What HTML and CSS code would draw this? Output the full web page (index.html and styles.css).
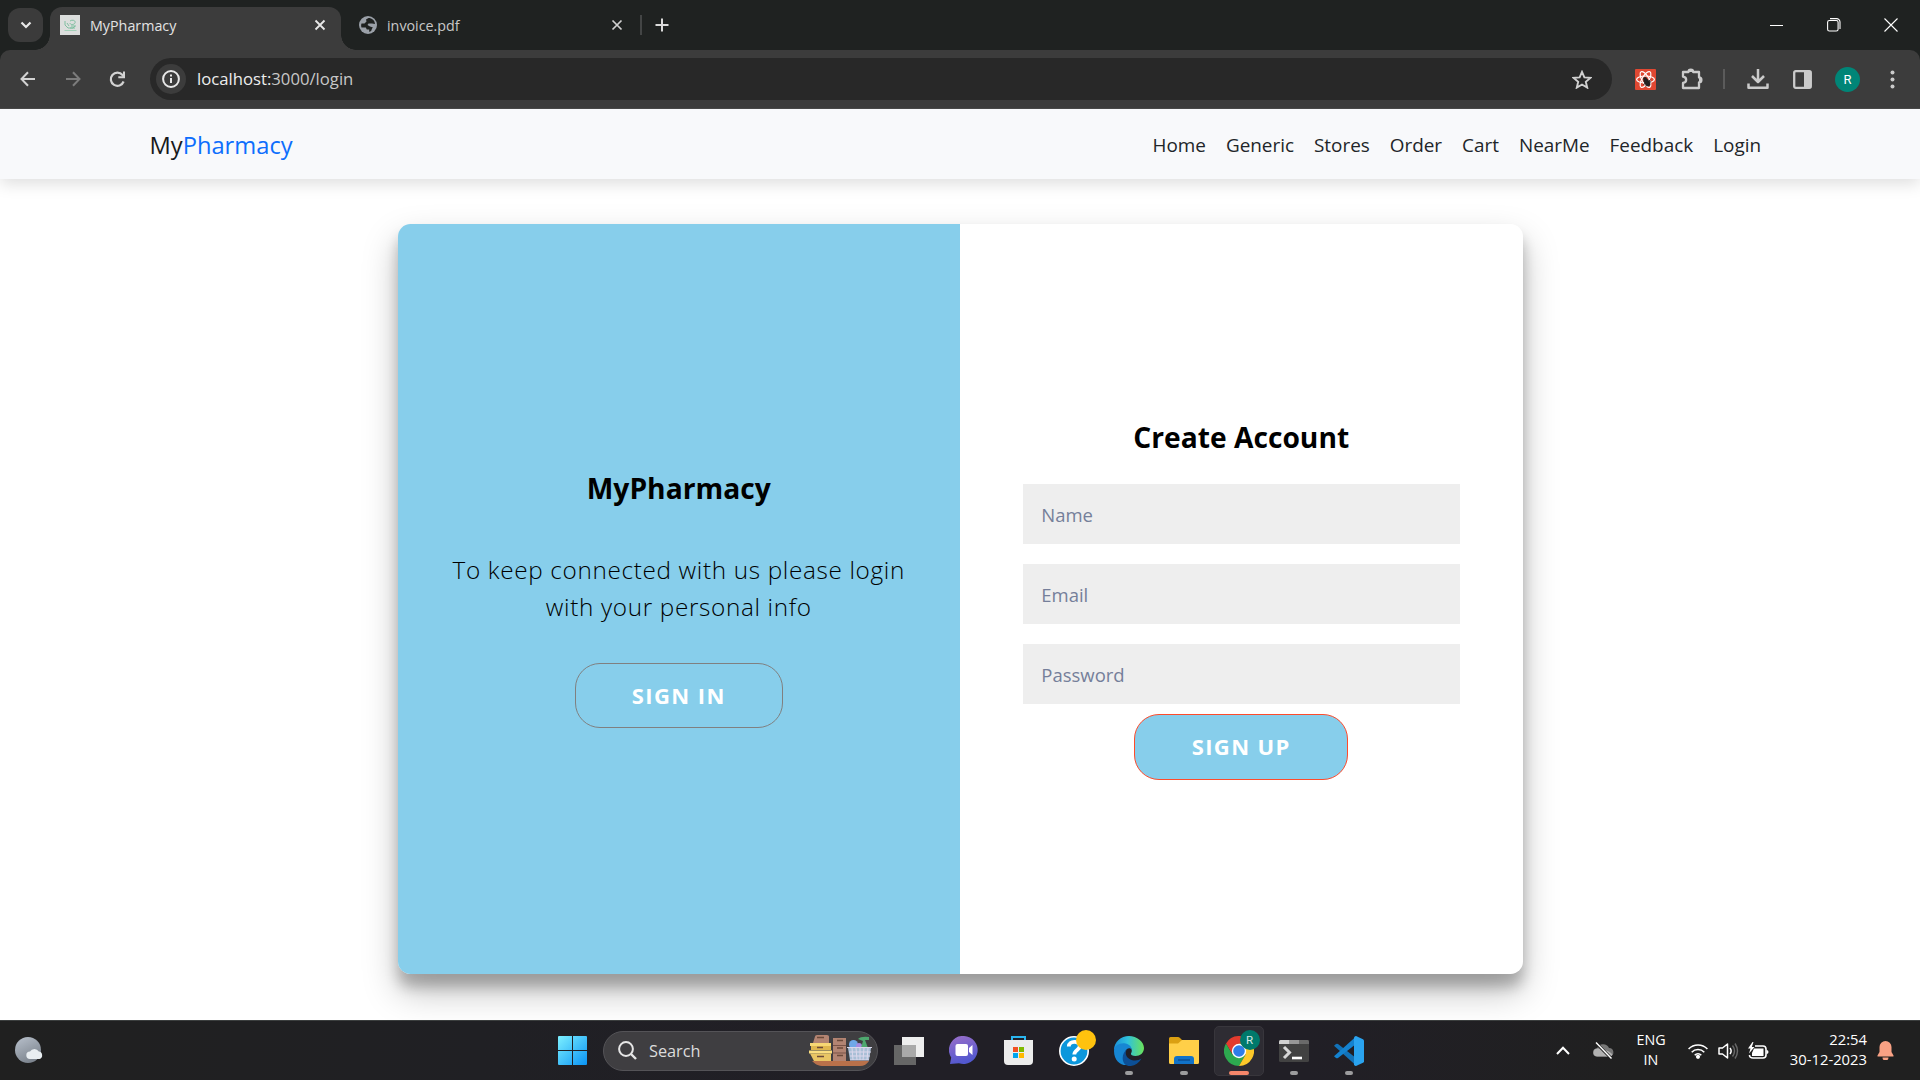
FILE: index.html
```
<!DOCTYPE html>
<html lang="en">
<head>
<meta charset="utf-8">
<title>MyPharmacy</title>
<link rel="stylesheet" href="styles.css">
</head>
<body>
<div class="screen">
  <header class="tabstrip">
    <button class="tab-search" aria-label="Search tabs"><svg width="12" height="8" viewBox="0 0 12 8"><path d="M1.5 1.5 6 6l4.500-4.500" fill="none" stroke="#e8e8e8" stroke-width="2.200"/></svg></button>
    <div class="tab tab-active">
      <svg width="20" height="20" viewBox="0 0 20 20"><rect width="20" height="20" fill="#dcdedd"/><path d="M5 6v4l3 3h5l2-2M7 8l2 3M10 6c3-2 6 0 5 2s-5 2-5 0M11 11h5M10 13h5" fill="none" stroke="#7fbfa0" stroke-width="1"/><path d="M4.500 15.500h12" stroke="#a3d0b8"/></svg>
      <span class="tab-title">MyPharmacy</span>
      <svg class="tab-close" width="12" height="12" viewBox="0 0 12 12"><path d="m1.500 1.500 9 9m0-9-9 9" stroke="#e8e8e8" stroke-width="1.800"/></svg>
    </div>
    <div class="tab tab-idle">
      <svg width="18" height="18" viewBox="0 0 18 18"><circle cx="9" cy="9" r="9" fill="#9aa0a8"/><path d="M9.500 2 7 3.500l.5 2L5.500 7.500H2.500C2 9 2 10 2.500 11.500h4.300l1 2h2.500l-.3 2.300c3.500-.3 2-3 4-4.300L11 10.500 8.500 9l1-1.500H13l3 .5C15.800 4.500 13 2 9.500 2z" fill="#1f2221"/></svg>
      <span class="tab-title">invoice.pdf</span>
      <svg class="tab-close" width="12" height="12" viewBox="0 0 12 12"><path d="m1.500 1.500 9 9m0-9-9 9" stroke="#d0d0d0" stroke-width="1.700"/></svg>
    </div>
    <span class="tab-divider"></span>
    <svg class="new-tab" width="14" height="14" viewBox="0 0 14 14"><path d="M7 .5v13M.5 7h13" stroke="#dadada" stroke-width="2"/></svg>
    <div class="window-controls">
      <svg width="14" height="14" viewBox="0 0 14 14"><path d="M0 7.500h13" stroke="#fff" stroke-width="1"/></svg>
      <svg width="14" height="14" viewBox="0 0 14 14"><rect x=".6" y="2.500" width="10.500" height="10.500" rx="1.800" fill="none" stroke="#fff" stroke-width="1.100"/><path d="M3 .6h6.500a3.500 3.500 0 0 1 3.500 3.500V11" fill="none" stroke="#fff" stroke-width="1.100"/></svg>
      <svg width="14" height="14" viewBox="0 0 14 14"><path d="m.5.5 13 13m0-13-13 13" stroke="#fff" stroke-width="1.100"/></svg>
    </div>
  </header>

  <div class="toolbar-back">
  <div class="toolbar">
    <div class="nav-buttons">
      <svg width="16" height="16" viewBox="0 0 16 16"><path d="M15 8H1.800M8 1.200 1.500 8 8 14.800" fill="none" stroke="#d2d2d2" stroke-width="2"/></svg>
      <svg width="16" height="16" viewBox="0 0 16 16"><path d="M1 8h13.200M8 1.200 14.500 8 8 14.800" fill="none" stroke="#7c7c7c" stroke-width="2"/></svg>
      <svg width="17" height="17" viewBox="0 0 17 17"><path d="M14.600 10.500A6.600 6.600 0 1 1 13.500 4l1.500 1.700" fill="none" stroke="#d2d2d2" stroke-width="2.200"/><path d="M16 .5v6.700H9.300V5.200H14V.5z" fill="#d2d2d2"/></svg>
    </div>
    <div class="omnibox">
      <span class="site-info"><svg width="18" height="18" viewBox="0 0 18 18"><circle cx="9" cy="9" r="7.900" fill="none" stroke="#e8e8e8" stroke-width="2"/><path d="M9 8v5M9 4.500v2" stroke="#e8e8e8" stroke-width="2"/></svg></span>
      <span class="url"><b>localhost:</b>3000/login</span>
      <svg class="star" width="20" height="19" viewBox="0 0 20 19"><path d="m10 1.900 2.400 5.500 5.900.5-4.500 3.900 1.400 5.800L10 14.500l-5.200 3.100 1.400-5.800-4.500-3.900 5.900-.5z" fill="none" stroke="#d0d0d0" stroke-width="1.900"/></svg>
    </div>
    <div class="extensions">
      <svg width="21" height="21" viewBox="0 0 21 21"><rect width="21" height="21" rx="1" fill="#e04832"/><g fill="none" stroke="#fff" stroke-width="1.200"><ellipse cx="10.500" cy="10.500" rx="8.900" ry="3.500"/><ellipse cx="10.500" cy="10.500" rx="8.900" ry="3.500" transform="rotate(60 10.500 10.500)"/><ellipse cx="10.500" cy="10.500" rx="8.900" ry="3.500" transform="rotate(120 10.500 10.500)"/></g><ellipse cx="12" cy="13.500" rx="2.600" ry="4.200" transform="rotate(-35 12 13.500)" fill="#222"/><circle cx="10" cy="9.800" r="1.900" fill="#222"/><path d="m8.500 12 7.500 1M8.500 15.500l7-4.500M12 10l-1 7.500" stroke="#222"/></svg>
      <svg class="x-puzzle" width="22" height="22" viewBox="0 0 22 22"><path d="M2 4h5.500a2.300 2.300 0 0 1 4.600 0H18v5.500a2.300 2.300 0 0 1 0 4.800V20H2v-5c4.200-.5 4.200-5.800 0-6.300z" fill="none" stroke="#cbcbcb" stroke-width="2.300" stroke-linejoin="round"/><path d="M7.500 4a2.300 2.300 0 0 1 4.600 0zM18 9.500a2.300 2.300 0 0 1 0 4.800z" fill="#cbcbcb"/></svg>
      <span class="tool-divider"></span>
      <svg class="x-download" width="22" height="21" viewBox="0 0 22 21"><path d="M11 0v12M5 7l6 6 6-6M1.500 14.500v4.300h19v-4.300" fill="none" stroke="#cbcbcb" stroke-width="2.500" stroke-linejoin="round"/></svg>
      <svg class="x-panel" width="19" height="19" viewBox="0 0 19 19"><rect x="1.200" y="1.200" width="16.600" height="16.600" rx="1.500" fill="none" stroke="#cbcbcb" stroke-width="2.300"/><path d="M11 1h7v17h-7z" fill="#cbcbcb"/></svg>
      <span class="avatar">R</span>
      <svg class="x-menu" width="5" height="19" viewBox="0 0 5 19"><g fill="#cbcbcb"><circle cx="2.500" cy="2.500" r="2"/><circle cx="2.500" cy="9.500" r="2"/><circle cx="2.500" cy="16.500" r="2"/></g></svg>
    </div>
  </div>
  </div>

  <main class="page">
    <nav class="navbar">
      <div class="brand">My<span>Pharmacy</span></div>
      <ul class="links">
        <li>Home</li><li>Generic</li><li>Stores</li><li>Order</li><li>Cart</li><li>NearMe</li><li>Feedback</li><li>Login</li>
      </ul>
    </nav>
    <section class="card">
      <div class="panel panel-intro">
        <h1>MyPharmacy</h1>
        <p>To keep connected with us please login<br>with your personal info</p>
        <button class="btn btn-ghost">SIGN IN</button>
      </div>
      <form class="panel panel-form">
        <h1>Create Account</h1>
        <input type="text" placeholder="Name">
        <input type="email" placeholder="Email">
        <input type="password" placeholder="Password">
        <button class="btn btn-primary" type="button">SIGN UP</button>
      </form>
    </section>
  </main>

  <footer class="taskbar">
    <svg class="weather" width="29" height="27" viewBox="0 0 29 27"><defs><linearGradient id="moon" x2=".5" y2="1"><stop stop-color="#b9c1cc"/><stop offset="1" stop-color="#7d858f"/></linearGradient></defs><circle cx="13" cy="13" r="13" fill="url(#moon)"/><path d="M15 22a3.700 3.700 0 0 1 0-7.400 5 5 0 0 1 8.800 0 3.800 3.800 0 0 1 .7 7.400z" fill="#e9eef2"/></svg>
    <div class="apps">
      <span class="app"><svg width="29" height="29" viewBox="0 0 29 29"><defs><linearGradient id="win" x2="1" y2="1"><stop stop-color="#7df0ff"/><stop offset="1" stop-color="#0a94f5"/></linearGradient></defs><path d="M0 1q0-1 1-1h13v14H0zM15 0h13q1 0 1 1v13H15zM0 15h14v14H1q-1 0-1-1zM15 15h14v13q0 1-1 1H15z" fill="url(#win)"/></svg></span>
      <div class="search">
        <svg width="19" height="19" viewBox="0 0 19 19"><circle cx="8" cy="8" r="6.900" fill="none" stroke="#e6e6e6" stroke-width="2"/><path d="m13 13 5 5" stroke="#e6e6e6" stroke-width="2.400"/></svg>
        <span>Search</span>
        <svg class="search-art" width="63" height="31" viewBox="0 0 63 31"><path d="M3 26h57c-2 3-5 5-9 5H15c-6 0-9-2-12-5z" fill="#b9714a"/><path d="M6 1.500Q6 0 8 0h10q2 0 2 1.500V8H4z" fill="#b28472"/><path d="M1 8h21v3H1z" fill="#f7d774"/><path d="M2 11h20v4H2z" fill="#dfb64f"/><path d="M0 15.500h23v3H0z" fill="#fbdf80"/><path d="M1 18.500h21V26H5z" fill="#e9c665"/><path d="M24 3h13v23H24z" fill="#b28472"/><path d="M24 10.500h13M24 18h13" stroke="#795347"/><path d="M8 2.500h7M8 12.500h6M8 21.500h7M28 5.500h6M28 13h6M28 20.500h6" stroke="#6b4a3a" stroke-width="1.400"/><circle cx="44.500" cy="9.500" r="4.500" fill="#6fa8e8"/><circle cx="50" cy="11" r="3" fill="#a58be0"/><path d="M49 4q3-3 11-2v3h-4l3 8h-7l2-7z" fill="#4ea86f"/><path d="m39 13 2 12h19l2-12z" fill="#a9bfd6"/><path d="M38 12.500h25M40 17h22M41 21h20M41 25h19M43 13l1 12M47 13l1 12M51 13v12M55 13l-1 12M59 13l-1 12" stroke="#dcd8ec" stroke-width="1"/></svg>
      </div>
      <span class="app"><svg width="30" height="28" viewBox="0 0 30 28"><path d="M0 8h22v20H0z" fill="#666" /><path d="M8 0h22v20H8z" fill="#eee"/><path d="M8 8h14v12H8z" fill="#a9a9a9"/></svg></span>
      <span class="app nudge"><svg width="29" height="29" viewBox="0 0 29 29"><defs><linearGradient id="chat" x2=".3" y2="1"><stop stop-color="#9b6fc9"/><stop offset="1" stop-color="#5258cf"/></linearGradient></defs><path d="M15 0a14 14 0 1 1-5 27.200L1 28l1.200-6.500A14 14 0 0 1 15 0z" fill="url(#chat)"/><rect x="6.500" y="8" width="12.500" height="12" rx="2" fill="#fff"/><path d="m20 12 3.500-3v10L20 16z" fill="#fff"/></svg></span>
      <span class="app nudge"><svg width="29" height="29" viewBox="0 0 29 29"><path d="M8 5V1h13v4" fill="none" stroke="#2ab6f0" stroke-width="2"/><path d="M0 4h29v21q0 4-4 4H4q-4 0-4-4z" fill="#ececec"/><path d="M9 11h5v5H9z" fill="#f25022"/><path d="M15 11h5v5h-5z" fill="#7fba00"/><path d="M9 17h5v5H9z" fill="#00a4ef"/><path d="M15 17h5v5h-5z" fill="#ffb900"/></svg></span>
      <span class="app"><svg width="30" height="30" viewBox="0 0 30 30"><circle cx="15" cy="15" r="14.200" fill="#0c97dc" stroke="#fff" stroke-width="1.600"/><path d="M9.800 10.500c0-6 11-6 11-.5 0 4-5.500 4-5.500 8.500" fill="none" stroke="#fff" stroke-width="3.800"/><circle cx="15.200" cy="23" r="2.500" fill="#fff"/></svg><i class="dot-badge"></i></span>
      <span class="app running"><svg width="30" height="30" viewBox="0 0 30 30"><defs><linearGradient id="edge" x2="1"><stop stop-color="#1b8fd8"/><stop offset=".45" stop-color="#2fc1dd"/><stop offset="1" stop-color="#6be35a"/></linearGradient></defs><path d="M0 14C0 6 7 0 15 0s15 6 15 12c0 5-4 8-8.500 8-3 0-5-1-4.500-2.500 2-3 .5-8-5-8C7 9.500 2 11 0 14z" fill="url(#edge)"/><path d="M0 15c0-5 5-8 10-7.800 5 .3 8 4 7.800 7-.8-2-3-2.500-4.800-1.200-4 3-2 13 6 13.500C12 32.500 0 28 0 15z" fill="#1786d3"/><path d="M13 13.500c-2 2-2 7 2.500 9.500 4.500 2.500 9 1.500 12-.5-3 5.500-8 8-13 7.500C7 29 7 17 13 13.500z" fill="#0c4f96"/></svg></span>
      <span class="app running"><svg width="30" height="27" viewBox="0 0 30 27"><path d="M0 1.500Q0 0 1.500 0H9q1 0 2 1l2 2H28q2 0 2 2v6H0z" fill="#dba012"/><path d="M0 6.500h9L13 3h17v22.500q0 1.500-1.500 1.500h-27Q0 27 0 25.500z" fill="#ffcf48"/><path d="M5 27v-5q0-3 3-3h14q3 0 3 3v5z" fill="#1172c8"/><path d="M9 23h12" stroke="#0a4a8c" stroke-width="1.300"/></svg></span>
      <span class="app running current"><svg width="30" height="30" viewBox="0 0 30 30"><path d="M2 7.500A15 15 0 0 1 28 7.500H15l-6.500 11z" fill="#e33b2e"/><path d="M2 7.500A15 15 0 0 0 15 30l6.500-11.300H8.500z" fill="#2da94f"/><path d="M28 7.500A15 15 0 0 1 15 30l6.500-11.300L15 7.500z" fill="#fdc829"/><circle cx="15" cy="15" r="7.200" fill="#fff"/><circle cx="15" cy="15" r="5.800" fill="#2f7de9"/></svg><i class="user-badge">R</i></span>
      <span class="app running"><svg width="30" height="22" viewBox="0 0 30 22"><rect width="30" height="22" rx="1.500" fill="#424242"/><path d="M0 4V1.500Q0 0 1.500 0H10v4z" fill="#cfcfcf"/><path d="M10 0h10v4H10z" fill="#979797"/><path d="M20 0h8.500Q30 0 30 1.500V4H20z" fill="#6a6a6a"/><path d="m5 7 5.500 5.500L5 18" fill="none" stroke="#d6d6d6" stroke-width="3"/><path d="M13 18h10" stroke="#fff" stroke-width="2.600"/></svg></span>
      <span class="app running"><svg width="30" height="30" viewBox="0 0 30 30"><path d="M0 9.800 2 8q1-.6 2 0l18 14v7.500z" fill="#1272b8"/><path d="M0 20.200 2 22q1 .6 2 0L22 8V.5z" fill="#1482cf"/><path d="m22 0 7 3.200q1 .5 1 1.500v20.600q0 1-1 1.500L22 30q-1.500 0-2-1.500v-27Q20.500 0 22 0z" fill="#2aa3ef"/></svg></span>
    </div>
    <div class="tray">
      <svg class="t-chevron" width="14" height="9" viewBox="0 0 14 9"><path d="m1 8 6-6.300L13 8" fill="none" stroke="#fff" stroke-width="2"/></svg>
      <svg class="t-cloud" width="21" height="17" viewBox="0 0 21 17"><path d="M4 14.500a4 4 0 0 1 0-8 6.500 6.500 0 0 1 12-.5 4.300 4.300 0 0 1 1 8.500z" fill="#777"/><path d="M4 14.500a4 4 0 0 1 1-8c3 0 4 2 5 3 2-2 6-1 9.500 3-1 2-2 2-3 2z" fill="#b1b1b1"/><path d="m2.500.5 16 16" stroke="#202020" stroke-width="3"/><path d="m3 .5 15.500 16" stroke="#fff" stroke-width="1.400"/></svg>
      <div class="language">ENG<br>IN</div>
      <svg class="t-wifi" width="20" height="16" viewBox="0 0 20 16"><g fill="none" stroke="#fff" stroke-width="1.600"><path d="M.6 6a13 13 0 0 1 18.800 0M3.700 9.200a8.800 8.800 0 0 1 12.600 0M6.700 12.200a4.700 4.700 0 0 1 6.600 0"/></g><circle cx="10" cy="13.800" r="2.100" fill="#fff"/></svg>
      <svg class="t-sound" width="21" height="18" viewBox="0 0 21 18"><path d="M1 6h3.500L9.500 2v14l-5-4H1z" fill="none" stroke="#fff" stroke-width="1.500" stroke-linejoin="round"/><path d="M12 6q2.300 3 0 6" fill="none" stroke="#fff" stroke-width="1.500"/><path d="M14.500 3.500q4 5.500 0 11M17 1.500q5 7.500 0 15" fill="none" stroke="#686868" stroke-width="1.400"/></svg>
      <svg class="t-battery" width="21" height="18" viewBox="0 0 21 18"><path d="M7 4h8q3 0 3 3v6q0 3-3 3H5q-3.500 0-3.500-3" fill="none" stroke="#fff" stroke-width="1.600"/><path d="M6 6.500h9.500v7.500H4V11z" fill="#fff"/><path d="M18.500 8q2 0 2 2t-2 2z" fill="#fff"/><path d="M4.500 0 0 6.500h2.500L1 11.500 6.500 5H3.800L5.500 0z" fill="#fff"/></svg>
      <div class="clock">22:54<br>30-12-2023</div>
      <svg class="t-bell" width="17" height="19" viewBox="0 0 17 19"><path d="M8.500 0a6 6 0 0 1 6 6v5l2 3.500q.3 1-.7 1H1.200q-1 0-.7-1l2-3.500V6a6 6 0 0 1 6-6zM5.500 16.500h6a3 3 0 0 1-6 0z" fill="#f9a184"/></svg>
    </div>
  </footer>
</div>
</body>
</html>
```
FILE: styles.css
```
* { box-sizing: border-box; }
body { margin: 0; font-family: "Open Sans", "Noto Sans", sans-serif; }
svg { display: block; flex: none; }
button { font-family: inherit; }

.screen { width: 1920px; height: 1080px; display: flex; flex-direction: column; overflow: hidden; background: #fff; }

/* Tab strip */
.tabstrip { height: 50px; flex: none; display: flex; align-items: center; padding-left: 8px; background: #1f2221; }
.tab-search { width: 35px; height: 34px; padding: 0; border: 0; border-radius: 12px; background: #3b3b3b; display: flex; align-items: center; justify-content: center; }
.tab { display: flex; align-items: center; height: 43px; margin-top: 7px; padding-bottom: 7px; color: #e3e3e3; font-size: 14.300px; }
.tab-title { margin-left: 10px; }
.tab-close { margin-left: auto; }
.tab-active { position: relative; width: 291px; margin-left: 7px; padding-left: 10px; padding-right: 15px; background: #3c3c3c; border-radius: 12px 12px 0 0; }
.tab-active::before, .tab-active::after { content: ""; position: absolute; bottom: 0; width: 15px; height: 15px; }
.tab-active::before { right: 100%; background: radial-gradient(circle at 0 0, transparent 14.500px, #3c3c3c 15px); }
.tab-active::after { left: 100%; background: radial-gradient(circle at 100% 0, transparent 14.500px, #3c3c3c 15px); }
.tab-idle { width: 282px; padding-left: 18px; color: #c8c8c8; }
.tab-divider { width: 2px; height: 20px; margin-left: 17px; background: #434545; }
.new-tab { margin-left: 13px; }
.window-controls { margin-left: auto; margin-right: 22px; display: flex; gap: 43px; }

/* Toolbar */
.toolbar-back { flex: none; background: #1f2221; }
.toolbar { height: 59px; display: flex; align-items: center; background: #3c3c3c; border-radius: 10px 10px 0 0; border-bottom: 1px solid #484848; }
.nav-buttons { width: 150px; padding-left: 20px; display: flex; align-items: center; gap: 28.500px; }
.omnibox { width: 1462px; height: 42px; display: flex; align-items: center; padding: 0 20px 0 6px; border-radius: 21px; background: #282828; }
.site-info { width: 30px; height: 30px; display: flex; align-items: center; justify-content: center; border-radius: 50%; background: #3c3c3c; }
.url { margin-left: 11px; margin-top: -1px; font-size: 16.700px; color: #c7c7c7; }
.url b { font-weight: 400; color: #ededed; }
.star { margin-left: auto; }
.extensions { flex: 1; display: flex; align-items: center; padding-left: 23px; }
.x-puzzle { margin-left: 25px; }
.tool-divider { width: 2px; height: 20px; margin-left: 20px; background: #5b5b5b; }
.x-download { margin-left: 21.500px; }
.x-panel { margin-left: 24.500px; }
.avatar { width: 25px; height: 25px; margin-left: 23px; border-radius: 50%; background: #008577; color: #fff; font: 13px/25px Roboto, sans-serif; text-align: center; }
.x-menu { margin-left: 30px; }

/* Site */
.page { height: 911px; flex: none; overflow: hidden; display: flex; flex-direction: column; align-items: center; background: #fff; }
.navbar { width: 100%; height: 70px; flex: none; display: flex; align-items: center; justify-content: space-between; padding: 0 159px 0 149.500px; background: #f8f9fb; box-shadow: 0 5px 15px rgba(0, 0, 0, .13); color: #212529; }
.brand { font-size: 23.700px; color: #17191c; padding-top: 1px; }
.brand span { color: #0d6efd; }
.links { display: flex; gap: 20px; margin: 0; padding: 1px 0 0; list-style: none; font-size: 18.900px; color: #212529; }
.card { width: 1125px; height: 750px; margin-top: 45px; display: flex; overflow: hidden; border-radius: 12.500px; background: #fff; box-shadow: 0 17.500px 35px rgba(0, 0, 0, .25), 0 12.500px 12.500px rgba(0, 0, 0, .22); flex: none; }
.panel { width: 50%; display: flex; flex-direction: column; align-items: center; justify-content: center; color: #000; }
.panel h1 { margin: 0; font-size: 28.200px; line-height: 36px; font-weight: 700; }
.panel-intro { background: #87ceeb; padding: 0 50px; }
.panel-intro p { margin: 45px 0 37.500px; white-space: nowrap; text-align: center; font-size: 24.300px; line-height: 37.500px; font-weight: 300; letter-spacing: .66px; }
.panel-form { padding: 1px 62.500px 0; }
.panel-form h1 { margin-bottom: 19px; }
.panel-form input { width: 100%; height: 60px; margin: 10px 0; padding: 0 18.750px; border: 0; border-radius: 0; background: #eee; font: 18.500px "Open Sans", sans-serif; }
.panel-form input::placeholder { color: #757f9a; opacity: 1; }
.btn { padding: 0 0 2px; border-radius: 25px; border: 1.250px solid; font-size: 22px; font-weight: 700; letter-spacing: 1.400px; color: #fff; }
.btn-ghost { width: 208px; height: 65px; background: transparent; border-color: #808080; }
.btn-primary { width: 214px; height: 66px; background: #87ceeb; border-color: #ff4b2b; }

/* Taskbar */
.taskbar { height: 60px; flex: none; display: flex; align-items: center; border-top: 1px solid #3b3e3e; background: linear-gradient(90deg, #202020 0, #202024 25%, #211f26 45%, #211f26 68%, #202020 85%); }
.weather { margin-left: 15px; margin-right: 501px; }
.apps { display: flex; align-items: center; }
.app { position: relative; width: 55px; height: 50px; display: flex; align-items: center; justify-content: center; }
.nudge { padding-right: 2px; }
.running::after { content: ""; position: absolute; bottom: 1px; left: 23.500px; width: 8px; height: 4px; border-radius: 2px; background: #9c9c9e; }
.current::before { content: ""; position: absolute; inset: 0 2.500px; border-radius: 5px; border: 1px solid #38363c; background: #2e2c33; }
.current svg { position: relative; }
.current::after { left: 17.500px; width: 20px; background: #f5866a; }
.search { width: 275px; height: 40px; margin: 0 3.500px 0 3px; padding: 0 5px 0 14px; display: flex; align-items: center; border: 1px solid #545357; border-radius: 20px; background: #3f3e41; color: #dcdcdc; font-size: 16.300px; }
.search span { margin-left: 12px; }
.search-art { margin-left: auto; }
.dot-badge, .user-badge { position: absolute; top: 4px; width: 20px; height: 20px; border-radius: 50%; }
.dot-badge { right: 6px; background: #ffc20e; }
.user-badge { right: 7px; background: #00796b; color: #d8e8e6; font: 11.500px/20px Roboto, sans-serif; text-align: center; }
.tray { margin-left: auto; display: flex; align-items: center; color: #fff; font-size: 14.800px; line-height: 20px; }
.t-cloud { margin-left: 23px; }
.language { width: 40px; margin-left: 17px; margin-top: -1px; text-align: center; font-size: 14.300px; }
.t-wifi { margin-left: 17px; }
.t-sound { margin-left: 10px; }
.t-battery { margin-left: 9px; }
.clock { width: 98px; margin-top: -3px; text-align: right; }
.t-bell { margin: 0 26px 0 10px; }
```
